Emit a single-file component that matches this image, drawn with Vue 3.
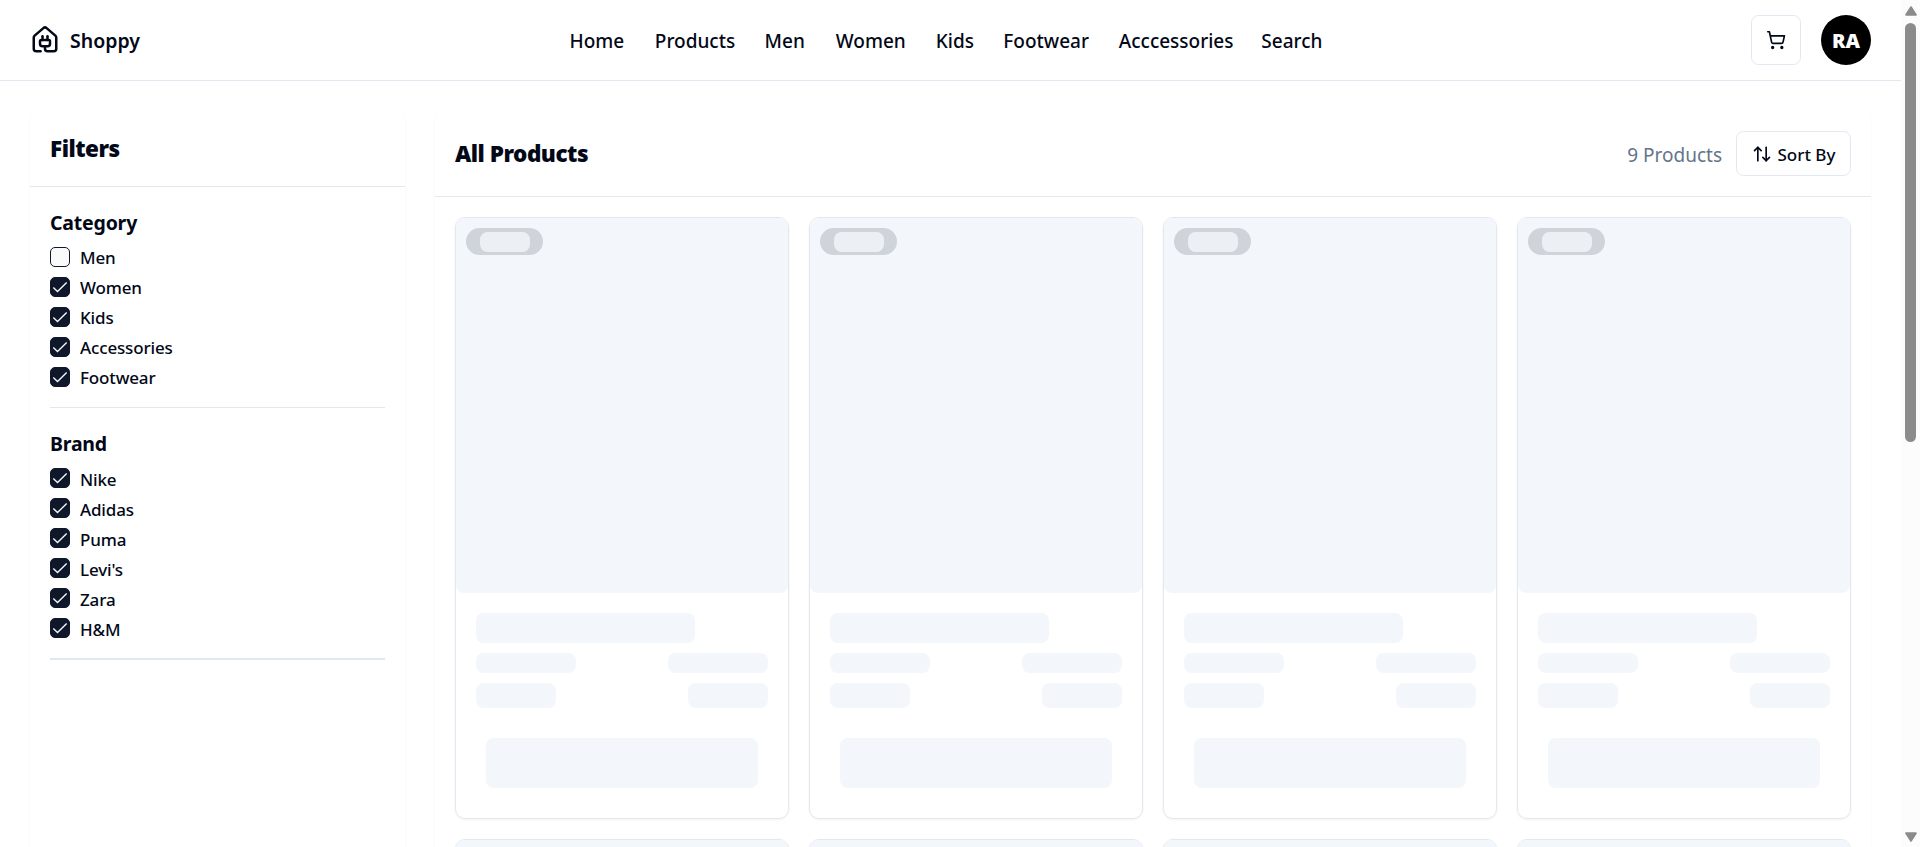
<script setup>
const nav = ['Home', 'Products', 'Men', 'Women', 'Kids', 'Footwear', 'Acccessories', 'Search']
const groups = [
  {
    title: 'Category',
    items: [
      { label: 'Men', checked: false },
      { label: 'Women', checked: true },
      { label: 'Kids', checked: true },
      { label: 'Accessories', checked: true },
      { label: 'Footwear', checked: true },
    ],
  },
  {
    title: 'Brand',
    last: true,
    items: ['Nike', 'Adidas', 'Puma', "Levi's", 'Zara', 'H&M'].map((label) => ({ label, checked: true })),
  },
]
</script>

<template>
  <div class="window">
    <div class="page">
      <header class="header">
        <div class="brand">
          <svg class="logo" viewBox="0 0 24 24">
            <path d="M10 12V8.964" />
            <path d="M14 12V8.964" />
            <path d="M15 12a1 1 0 0 1 1 1v2a2 2 0 0 1-2 2h-4a2 2 0 0 1-2-2v-2a1 1 0 0 1 1-1z" />
            <path d="M8.5 21H5a2 2 0 0 1-2-2v-9a2 2 0 0 1 .709-1.528l7-5.999a2 2 0 0 1 2.582 0l7 5.999A2 2 0 0 1 21 10v9a2 2 0 0 1-2 2h-5a2 2 0 0 1-2-2v-2" />
          </svg>
          <span>Shoppy</span>
        </div>
        <nav class="nav">
          <a v-for="n in nav" :key="n">{{ n }}</a>
        </nav>
        <div class="actions">
          <button class="cart">
            <svg viewBox="0 0 24 24">
              <circle cx="8" cy="21" r="1" />
              <circle cx="19" cy="21" r="1" />
              <path d="M2.05 2.05h2l2.66 12.42a2 2 0 0 0 2 1.58h9.78a2 2 0 0 0 1.95-1.57l1.65-7.43H5.12" />
            </svg>
          </button>
          <div class="avatar">RA</div>
        </div>
      </header>

      <main class="main">
        <aside class="panel">
          <div class="filters-head"><h2>Filters</h2></div>
          <div class="filters">
            <section v-for="g in groups" :key="g.title" :class="{ last: g.last }">
              <h3>{{ g.title }}</h3>
              <ul>
                <li v-for="i in g.items" :key="i.label">
                  <span class="box" :class="{ on: i.checked }">
                    <svg v-if="i.checked" viewBox="0 0 24 24"><path d="M20 6.5 9 17.5l-5-5" /></svg>
                  </span>
                  <span class="label">{{ i.label }}</span>
                </li>
              </ul>
              <div class="rule"></div>
            </section>
          </div>
        </aside>

        <section class="panel">
          <div class="products-head">
            <h2>All Products</h2>
            <span class="count">9 Products</span>
            <button class="sort">
              <svg viewBox="0 0 24 24">
                <path d="m21 16-4 4-4-4" />
                <path d="M17 20V4" />
                <path d="m3 8 4-4 4 4" />
                <path d="M7 4v16" />
              </svg>
              <span>Sort By</span>
            </button>
          </div>
          <div class="grid">
            <article v-for="n in 8" :key="n" class="card">
              <div class="photo">
                <div class="badge"><div class="badge-inner"></div></div>
              </div>
              <div class="body">
                <div class="sk title"></div>
                <div class="row"><div class="sk meta"></div><div class="sk meta"></div></div>
                <div class="row"><div class="sk price"></div><div class="sk price"></div></div>
              </div>
              <div class="sk action"></div>
            </article>
          </div>
        </section>
      </main>
    </div>

    <div class="scrollbar">
      <svg class="arrow" viewBox="0 0 12 10"><path d="M6 1.2 10.8 8.8H1.2Z" /></svg>
      <div class="track"><div class="thumb"></div></div>
      <svg class="arrow" viewBox="0 0 12 10"><path d="M6 8.8 1.2 1.2H10.8Z" /></svg>
    </div>
  </div>
</template>

<style>
html,
body {
  margin: 0;
  overflow: hidden;
}
</style>

<style scoped>
* {
  box-sizing: border-box;
}
h2,
h3,
ul {
  margin: 0;
  padding: 0;
}
svg {
  display: block;
  fill: none;
  stroke: currentColor;
  stroke-width: 2;
  stroke-linecap: round;
  stroke-linejoin: round;
}
.window {
  display: flex;
  height: 847px;
  overflow: hidden;
  background: #fff;
  color: #020817;
  font-family: "Noto Sans", "Open Sans", sans-serif;
}
.page {
  flex: 1;
  min-width: 0;
}
.header {
  display: flex;
  align-items: center;
  height: 81px;
  padding: 0 30px;
  border-bottom: 1px solid #e2e8f0;
}
.brand {
  display: flex;
  align-items: center;
  gap: 10px;
  width: 539.5px;
  font-size: 19.5px;
  font-weight: 650;
}
.logo {
  width: 30px;
  height: 30px;
}
.nav {
  display: grid;
  grid-template-columns: 55.3px 79.8px 41.2px 70px 37.5px 85.5px 112.5px 62px;
  column-gap: 30px;
  padding-top: 2px;
  font-size: 19px;
  font-weight: 500;
  white-space: nowrap;
}
.actions {
  display: flex;
  gap: 20px;
  margin-left: auto;
}
button {
  display: flex;
  align-items: center;
  justify-content: center;
  padding: 0;
  border: 1px solid #e2e8f0;
  border-radius: 7.5px;
  background: #fff;
  color: #020817;
  font-family: inherit;
}
button svg {
  width: 20px;
  height: 20px;
}
.cart {
  width: 50px;
  height: 50px;
}
.avatar {
  display: grid;
  place-items: center;
  width: 50px;
  height: 50px;
  border-radius: 50%;
  background: #000;
  color: #fff;
  font-size: 20px;
  font-weight: 900;
}
.main {
  display: grid;
  grid-template-columns: 375px 1fr;
  gap: 30px;
  padding: 30px;
}
.panel {
  height: 1600px;
  border-radius: 10px;
  box-shadow: 0 1px 2.5px rgba(0, 0, 0, 0.05);
}
h2 {
  font-size: 22.5px;
  font-weight: 900;
  line-height: 35px;
  letter-spacing: -0.5px;
}
.filters-head {
  height: 76px;
  padding: 20px;
  border-bottom: 1px solid #e2e8f0;
}
.filters {
  padding: 20px;
}
h3 {
  height: 40px;
  font-size: 19.5px;
  font-weight: 700;
  line-height: 31px;
  letter-spacing: -0.2px;
}
ul {
  display: grid;
  gap: 10px;
  list-style: none;
}
li {
  display: flex;
  align-items: center;
  gap: 10px;
  height: 20px;
}
.label {
  padding-top: 2px;
  font-size: 17px;
  font-weight: 500;
  line-height: 20px;
  letter-spacing: -0.15px;
}
.last .label {
  padding-top: 3px;
}
.box {
  display: grid;
  place-items: center;
  width: 20px;
  height: 20px;
  border: 1px solid #0f172a;
  border-radius: 5px;
  background: #fafafa;
  color: #f8fafc;
}
.box.on {
  background: #0f172a;
}
.box svg {
  width: 20px;
  height: 20px;
  margin: -1px;
  stroke-width: 1.6;
  stroke-linecap: butt;
  stroke-linejoin: miter;
}
.rule {
  height: 1px;
  margin: 20px 0;
  background: #e2e8f0;
}
.last .rule {
  height: 2px;
}
.products-head {
  display: flex;
  align-items: center;
  height: 86px;
  padding: 0 20px;
  border-bottom: 1px solid #e2e8f0;
}
.count {
  margin: 0 14px 0 auto;
  padding-top: 2px;
  color: #64748b;
  font-size: 19px;
}
.sort {
  gap: 6px;
  width: 115px;
  height: 45px;
  font-size: 17px;
  font-weight: 550;
}
.sort span {
  padding-top: 1px;
}
.grid {
  display: grid;
  grid-template-columns: repeat(4, 1fr);
  gap: 20px;
  padding: 20px;
}
.card {
  height: 602px;
  border: 1px solid #e2e8f0;
  border-radius: 10px;
  box-shadow: 0 1px 2.5px rgba(0, 0, 0, 0.05);
}
.photo {
  height: 375px;
  padding: 10px;
  border-radius: 8px;
  background: #f3f6fb;
}
.badge {
  display: grid;
  place-items: center;
  width: 77px;
  height: 27px;
  border-radius: 14px;
  background: #cfd3da;
}
.badge-inner {
  width: 50px;
  height: 20px;
  border-radius: 7.5px;
  background: #eceff4;
}
.body {
  display: grid;
  gap: 10px;
  padding: 20px;
}
.sk {
  border-radius: 7.5px;
  background: #f3f6fb;
}
.title {
  width: 75%;
  height: 30px;
}
.row {
  display: flex;
  justify-content: space-between;
}
.meta {
  width: 100px;
  height: 20px;
}
.price {
  width: 80px;
  height: 25px;
}
.action {
  height: 50px;
  margin: 10px 30px 0;
}
.scrollbar {
  display: flex;
  flex-direction: column;
  align-items: center;
  width: 19px;
  padding: 6px 0 5px;
  background: #fcfcfc;
}
.arrow {
  width: 12px;
  height: 10px;
  fill: #8b8b8b;
  stroke: #8b8b8b;
}
.track {
  flex: 1;
  padding-top: 7px;
}
.thumb {
  width: 11px;
  height: 419px;
  border-radius: 6px;
  background: #8b8b8b;
}
</style>
